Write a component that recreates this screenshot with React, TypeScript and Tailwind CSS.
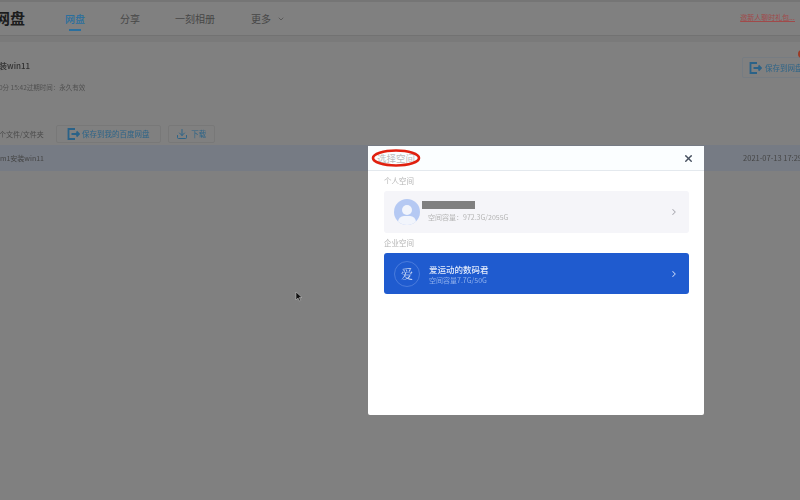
import { ChevronDown, ChevronRight, Download, X } from "lucide-react";

const cjk = "font-['Noto_Sans_CJK_SC','Liberation_Sans',sans-serif]";

function SaveIcon() {
	return (
		<svg width="13" height="12" viewBox="0 0 13 12" fill="none" stroke="#2a6288" strokeWidth="1.8">
			<path d="M8 1H1.5v10H8" />
			<path d="M4.5 6H12M9.5 3.5 12 6 9.5 8.5" />
		</svg>
	);
}

function Background() {
	return (
		<div className="flex h-full flex-col overflow-hidden blur-[0.7px]">
			<header className="flex h-[36px] shrink-0 items-center border-t-2 border-b border-t-[#757575] border-b-[#727272] bg-[#808080] pr-[5px]">
				<span className="-ml-[5px] text-[15px] font-bold text-[#1c1c1c]">网盘</span>
				<nav className="ml-[40px] flex items-center gap-[35px] text-[10px] text-[#474747]">
					<span className="relative flex h-[33px] items-center font-medium text-[#2a6f9e]">
						网盘
						<span className="absolute bottom-[4px] left-[4px] h-[2px] w-[12px] bg-[#2a6f9e]" />
					</span>
					<span>分享</span>
					<span>一刻相册</span>
					<span className="ml-[1px] flex items-center gap-[6px]">
						更多
						<ChevronDown size={8} />
					</span>
				</nav>
				<span className="ml-auto -translate-y-[1px] text-[7px] text-[#a04a4a] underline">
					邀新人聊时礼包...
				</span>
			</header>
			<div className="h-[6px] shrink-0 bg-[#7a7a7a]" />
			<section className="flex h-[80px] shrink-0 justify-between">
				<div className="-ml-[1px] pt-[18px]">
					<div className="text-[8px] font-medium text-[#303030]">装win11</div>
					<div className="mt-[11px] text-[6.5px] text-[#505050]">
						0分 15:42过期时间：永久有效
					</div>
				</div>
				<button className="relative -mr-[10px] mt-[15px] flex h-[21px] w-[68px] items-center gap-[3px] rounded-[2px] border border-[#767c82] px-[6px] text-[7.5px] whitespace-nowrap text-[#2d6488]">
					<SaveIcon />
					保存到网盘
					<span className="absolute -top-[8px] right-[3px] size-[8px] rounded-full bg-[#9c3b26]" />
				</button>
			</section>
			<div className="flex h-[23px] shrink-0 items-center pt-[1px]">
				<span className="-ml-[1px] text-[7px] text-[#4a4a4a]">个文件/文件夹</span>
				<button className="ml-[12px] flex h-[18px] w-[105px] items-center justify-center gap-[2px] rounded-[2px] border border-[#787878] text-[7.5px] text-[#2d6488]">
					<SaveIcon />
					保存到我的百度网盘
				</button>
				<button className="ml-[7px] flex h-[18px] w-[47px] items-center justify-center gap-[3px] rounded-[2px] border border-[#787878] text-[7.5px] text-[#2d6488]">
					<Download size={12} />
					下载
				</button>
			</div>
			<div className="flex h-[26px] shrink-0 items-center justify-between bg-[#767b84] text-[7px] text-[#454545]">
				<span>m1安装win11</span>
				<span className="-mr-[2px] text-[7.5px]">2021-07-13 17:29</span>
			</div>
			<div className="flex-1 bg-[#808080]" />
		</div>
	);
}

function Modal() {
	return (
		<div className="absolute left-[368px] top-[146px] flex h-[269px] w-[336px] flex-col rounded-[2px] bg-white blur-[0.5px]">
			<div className="flex h-[25px] shrink-0 items-center justify-between border-b border-[#e4e9ee] bg-[#fbfeff] pl-[9px] pr-[10px]">
				<span className="text-[9.5px] text-[#bcbcbc]">选择空间</span>
				<X size={11} strokeWidth={3} className="text-[#46505f]" />
			</div>
			<div className="flex flex-col pl-[16px] pr-[15px]">
				<div className="mt-[4px] text-[7.5px] leading-[11px] text-[#b4b4b4]">个人空间</div>
				<div className="mt-[5px] flex h-[42px] items-center rounded-[3px] bg-[#f5f5f9] pl-[10px] pr-[10px]">
					<div className="relative size-[26px] shrink-0 overflow-hidden rounded-full bg-[#b5c9f3]">
						<div className="absolute left-[8px] top-[6px] size-[10px] rounded-full bg-[#f2f5fc]" />
						<div className="absolute left-[4px] top-[17px] h-[12px] w-[18px] rounded-full bg-[#f2f5fc]" />
					</div>
					<div className="ml-[2px] flex -translate-y-[1px] flex-col">
						<div className="h-[8px] w-[53px] bg-[#808080]" />
						<div className="ml-[6px] mt-[3px] text-[7px] leading-[10px] text-[#b4b4b4]">
							空间容量：972.3G/2055G
						</div>
					</div>
					<ChevronRight size={10} strokeWidth={2.5} className="ml-auto text-[#a9a9b0]" />
				</div>
				<div className="mt-[4px] text-[7.5px] leading-[11px] text-[#b4b4b4]">企业空间</div>
				<div className="mt-[5px] flex h-[41px] items-center rounded-[3px] bg-[#1f5bcf] pl-[10px] pr-[10px]">
					<div className="flex size-[26px] shrink-0 items-center justify-center rounded-full border border-[#4a7bdc] font-['Noto_Serif_CJK_SC','Noto_Sans_CJK_SC',serif] text-[12px] text-[#d5e0f7]">
						爱
					</div>
					<div className="ml-[9px] flex flex-col">
						<div className="text-[8.5px] font-medium leading-[12px] text-[#e3ebfb]">爱运动的数码君</div>
						<div className="text-[7px] leading-[10px] text-[#8fb0ec]">空间容量7.7G/50G</div>
					</div>
					<ChevronRight size={10} strokeWidth={2.5} className="ml-auto text-[#c3d4f6]" />
				</div>
			</div>
			{/* hand drawn annotation round the title */}
			<svg className="absolute left-[3px] top-[2px]" width="54" height="21" viewBox="0 0 54 21" fill="none">
				<ellipse cx="25" cy="10" rx="23" ry="7.5" stroke="#e0200f" strokeWidth="2.6" />
			</svg>
		</div>
	);
}

export default function App() {
	return (
		<div className={`relative h-[500px] w-[800px] overflow-hidden bg-[#808080] ${cjk}`}>
			<Background />
			<Modal />
			<svg className="absolute left-[295px] top-[291px]" width="8" height="11" viewBox="0 0 8 11">
				<path d="M1 1v8l2-2 1.5 3 1.2-.6L4.3 6.5H7z" fill="#111" stroke="#ccc" strokeWidth="0.5" />
			</svg>
		</div>
	);
}
